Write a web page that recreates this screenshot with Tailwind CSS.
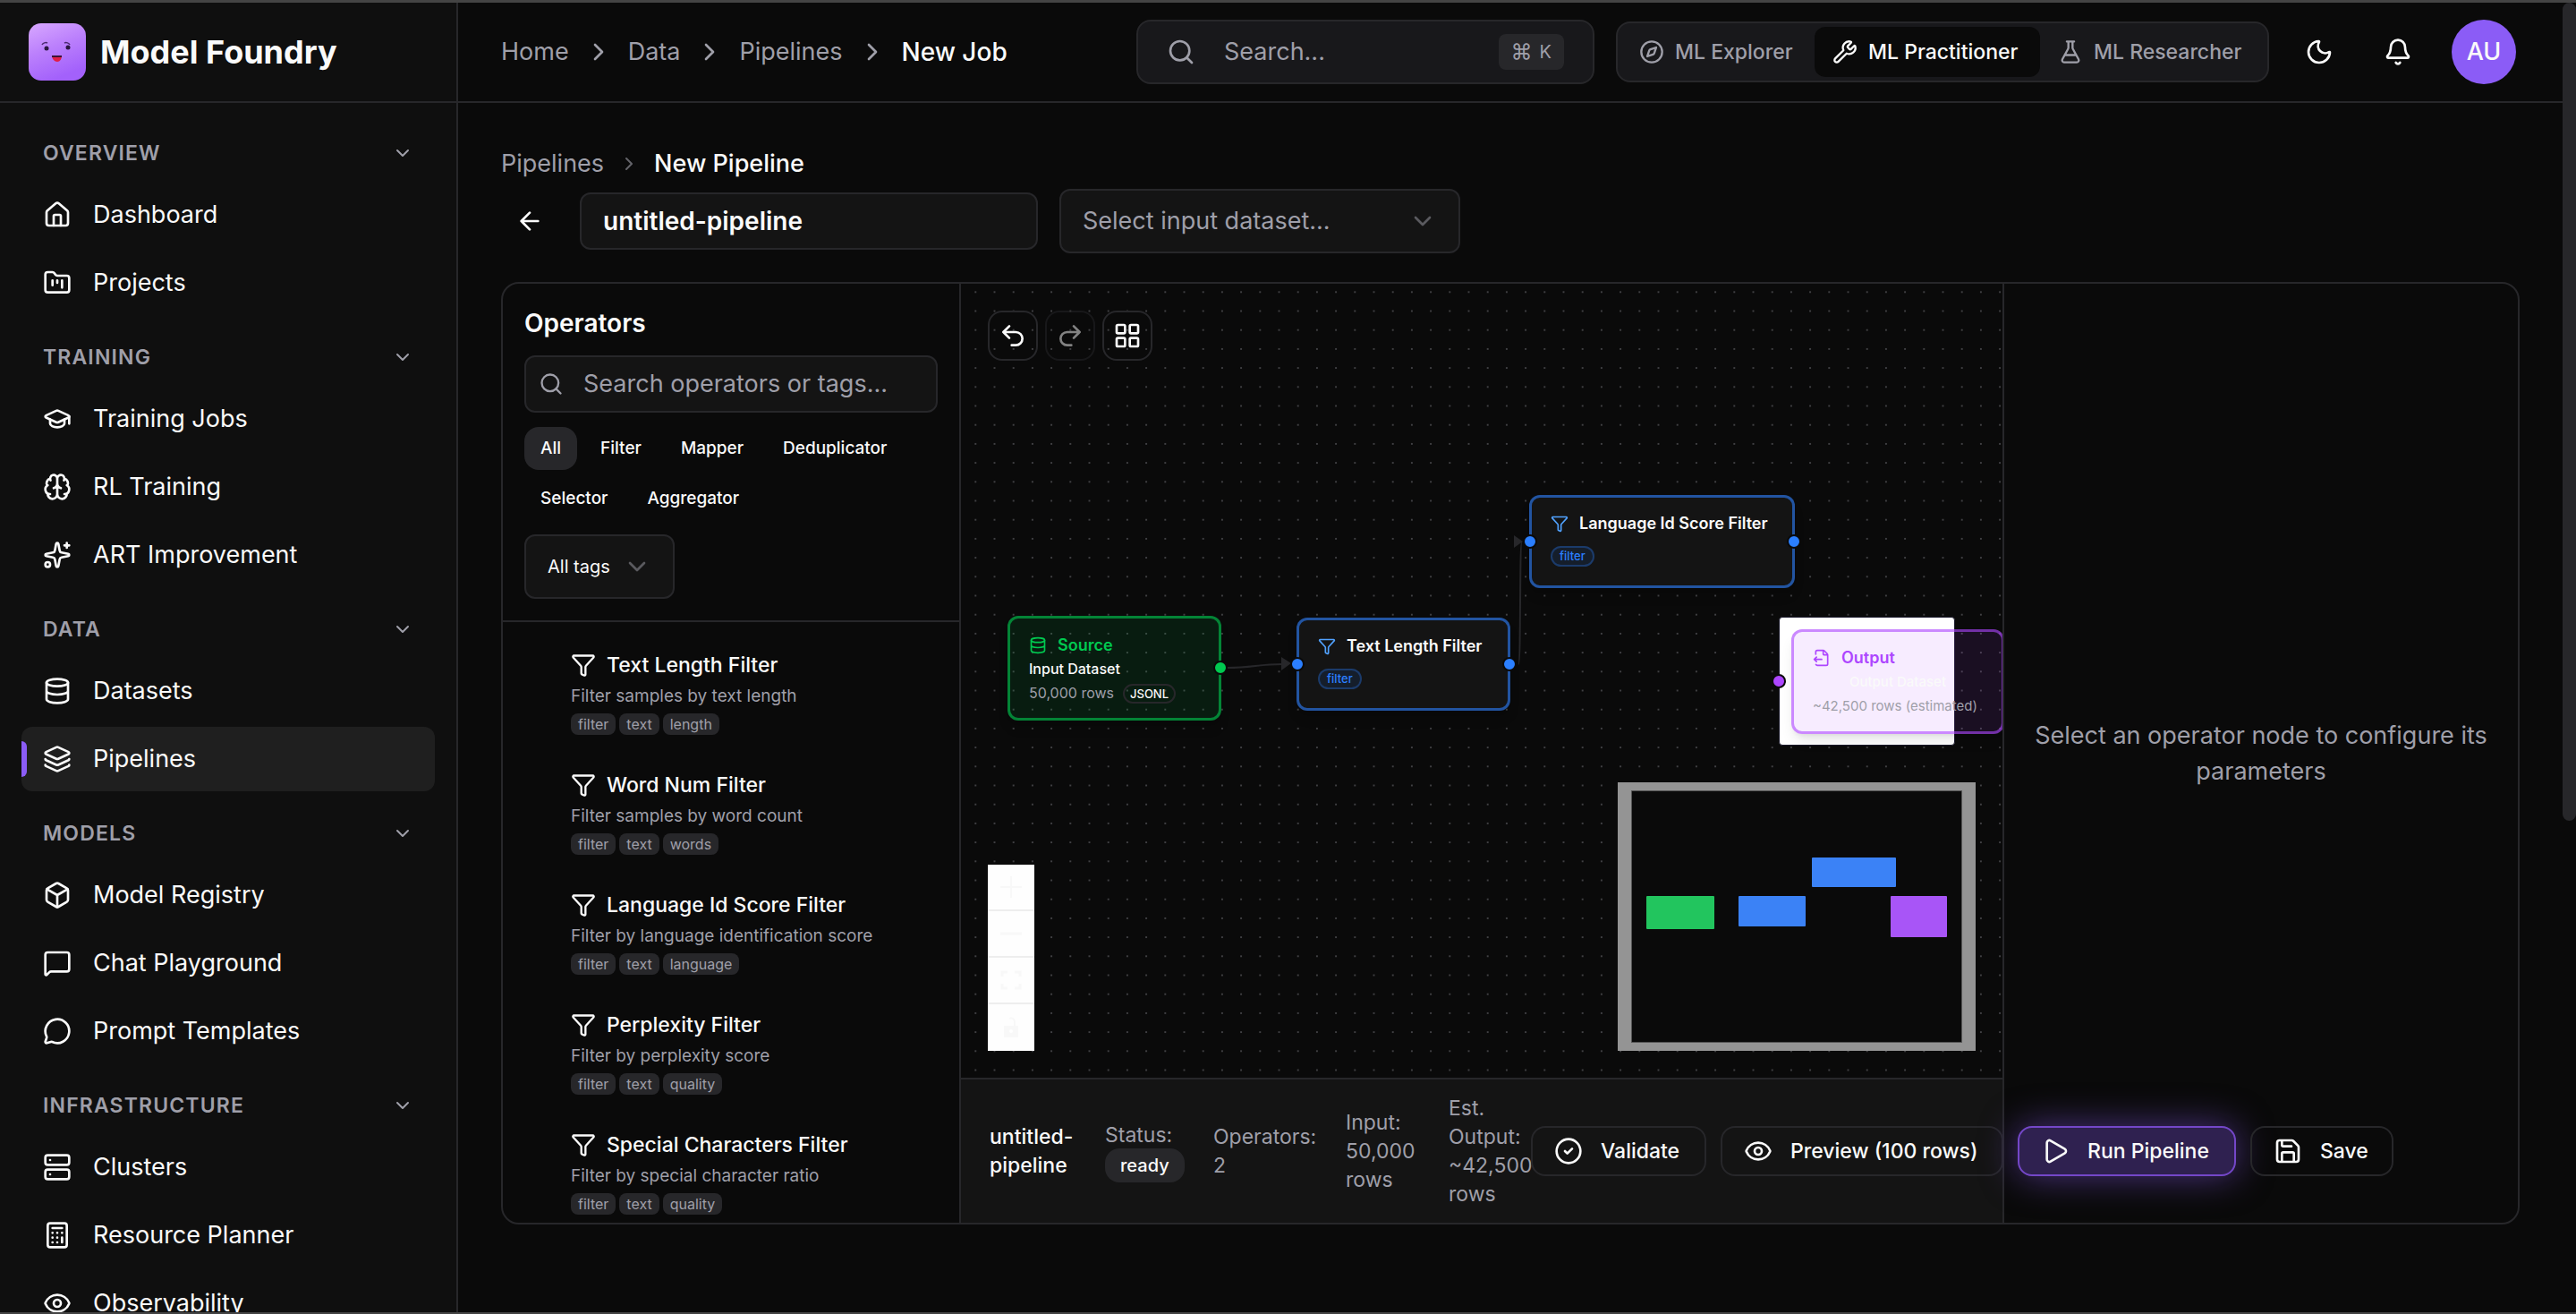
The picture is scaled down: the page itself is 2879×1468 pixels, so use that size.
<!DOCTYPE html>
<html lang="en">
<head>
<meta charset="UTF-8">
<meta name="viewport" content="width=device-width, initial-scale=1.0">
<title>New Pipeline – Model Foundry</title>
<script src="https://cdn.jsdelivr.net/npm/@tailwindcss/browser@4"></script>
</head>
<body class="flex h-screen overflow-hidden border-t-3 border-b-2 border-[#444] bg-[#0a0a0a] font-['Inter','Liberation_Sans',sans-serif] text-[27px] leading-10 text-[#fafafa]">

<!-- icon sprite -->
<svg class="hidden">
  <symbol id="house" viewBox="0 0 24 24"><path d="M15 21v-8a1 1 0 0 0-1-1h-4a1 1 0 0 0-1 1v8"/><path d="M3 10a2 2 0 0 1 .709-1.528l7-5.999a2 2 0 0 1 2.582 0l7 5.999A2 2 0 0 1 21 10v9a2 2 0 0 1-2 2H5a2 2 0 0 1-2-2z"/></symbol>
  <symbol id="folder" viewBox="0 0 24 24"><path d="M4 20h16a2 2 0 0 0 2-2V8a2 2 0 0 0-2-2h-7.93a2 2 0 0 1-1.66-.9l-.82-1.2A2 2 0 0 0 7.93 3H4a2 2 0 0 0-2 2v13c0 1.1.9 2 2 2Z"/><path d="M8 10v4M12 10v2M16 10v6"/></symbol>
  <symbol id="cap" viewBox="0 0 24 24"><path d="M21.42 10.922a1 1 0 0 0-.019-1.838L12.83 5.18a2 2 0 0 0-1.66 0L2.6 9.08a1 1 0 0 0 0 1.832l8.57 3.908a2 2 0 0 0 1.66 0z"/><path d="M22 10v6M6 12.5V16a6 3 0 0 0 12 0v-3.5"/></symbol>
  <symbol id="brain" viewBox="0 0 24 24"><path d="M12 18V5M15 13a4.17 4.17 0 0 1-3-4 4.17 4.17 0 0 1-3 4M17.598 6.5A3 3 0 1 0 12 5a3 3 0 1 0-5.598 1.5M17.997 5.125a4 4 0 0 1 2.526 5.77M18 18a4 4 0 0 0 2-7.464M19.967 17.483A4 4 0 1 1 12 18a4 4 0 1 1-7.967-.517M6 18a4 4 0 0 1-2-7.464M6.003 5.125a4 4 0 0 0-2.526 5.77"/></symbol>
  <symbol id="sparkles" viewBox="0 0 24 24"><path d="M11.017 2.814a1 1 0 0 1 1.966 0l1.051 5.558a2 2 0 0 0 1.594 1.594l5.558 1.051a1 1 0 0 1 0 1.966l-5.558 1.051a2 2 0 0 0-1.594 1.594l-1.051 5.558a1 1 0 0 1-1.966 0l-1.051-5.558a2 2 0 0 0-1.594-1.594l-5.558-1.051a1 1 0 0 1 0-1.966l5.558-1.051a2 2 0 0 0 1.594-1.594zM20 2v4M22 4h-4"/><circle cx="4" cy="20" r="2"/></symbol>
  <symbol id="database" viewBox="0 0 24 24"><ellipse cx="12" cy="5" rx="9" ry="3"/><path d="M3 5v14a9 3 0 0 0 18 0V5M3 12a9 3 0 0 0 18 0"/></symbol>
  <symbol id="layers" viewBox="0 0 24 24"><path d="M12.83 2.18a2 2 0 0 0-1.66 0L2.6 6.08a1 1 0 0 0 0 1.83l8.58 3.91a2 2 0 0 0 1.66 0l8.58-3.9a1 1 0 0 0 0-1.83zM2 12a1 1 0 0 0 .58.91l8.6 3.91a2 2 0 0 0 1.65 0l8.58-3.9A1 1 0 0 0 22 12M2 17a1 1 0 0 0 .58.91l8.6 3.91a2 2 0 0 0 1.65 0l8.58-3.9A1 1 0 0 0 22 17"/></symbol>
  <symbol id="box" viewBox="0 0 24 24"><path d="M21 8a2 2 0 0 0-1-1.73l-7-4a2 2 0 0 0-2 0l-7 4A2 2 0 0 0 3 8v8a2 2 0 0 0 1 1.73l7 4a2 2 0 0 0 2 0l7-4A2 2 0 0 0 21 16Z"/><path d="m3.3 7 8.7 5 8.7-5M12 22V12"/></symbol>
  <symbol id="chat" viewBox="0 0 24 24"><path d="M22 17a2 2 0 0 1-2 2H6.828a2 2 0 0 0-1.414.586l-2.202 2.202A.71.71 0 0 1 2 21.286V5a2 2 0 0 1 2-2h16a2 2 0 0 1 2 2z"/></symbol>
  <symbol id="bubble" viewBox="0 0 24 24"><path d="M2.992 16.342a2 2 0 0 1 .094 1.167l-1.065 3.29a1 1 0 0 0 1.236 1.168l3.413-.998a2 2 0 0 1 1.099.092 10 10 0 1 0-4.777-4.719"/></symbol>
  <symbol id="server" viewBox="0 0 24 24"><rect width="20" height="8" x="2" y="2" rx="2"/><rect width="20" height="8" x="2" y="14" rx="2"/><path d="M6 6h.01M6 18h.01"/></symbol>
  <symbol id="calculator" viewBox="0 0 24 24"><rect width="16" height="20" x="4" y="2" rx="2"/><path d="M8 6h8M16 14v4M16 10h.01M12 10h.01M8 10h.01M12 14h.01M8 14h.01M12 18h.01M8 18h.01"/></symbol>
  <symbol id="eye" viewBox="0 0 24 24"><path d="M2.062 12.348a1 1 0 0 1 0-.696 10.75 10.75 0 0 1 19.876 0 1 1 0 0 1 0 .696 10.75 10.75 0 0 1-19.876 0"/><circle cx="12" cy="12" r="3"/></symbol>
  <symbol id="funnel" viewBox="0 0 24 24"><path d="M10 20a1 1 0 0 0 .553.895l2 1A1 1 0 0 0 14 21v-7a2 2 0 0 1 .517-1.341L21.74 4.67A1 1 0 0 0 21 3H3a1 1 0 0 0-.742 1.67l7.225 7.989A2 2 0 0 1 10 14z"/></symbol>
  <symbol id="search" viewBox="0 0 24 24"><path d="m21 21-4.34-4.34"/><circle cx="11" cy="11" r="8"/></symbol>
  <symbol id="compass" viewBox="0 0 24 24"><circle cx="12" cy="12" r="10"/><path d="m16.24 7.76-1.804 5.411a2 2 0 0 1-1.265 1.265L7.76 16.24l1.804-5.411a2 2 0 0 1 1.265-1.265z"/></symbol>
  <symbol id="wrench" viewBox="0 0 24 24"><path d="M14.7 6.3a1 1 0 0 0 0 1.4l1.6 1.6a1 1 0 0 0 1.4 0l3.106-3.105c.32-.322.863-.22.983.218a6 6 0 0 1-8.259 7.057l-7.91 7.91a1 1 0 0 1-2.999-3l7.91-7.91a6 6 0 0 1 7.057-8.259c.438.12.54.662.219.984z"/></symbol>
  <symbol id="flask" viewBox="0 0 24 24"><path d="M14 2v6a2 2 0 0 0 .245.96l5.51 10.08A2 2 0 0 1 18 22H6a2 2 0 0 1-1.755-2.96l5.51-10.08A2 2 0 0 0 10 8V2M6.453 15h11.094M8.5 2h7"/></symbol>
  <symbol id="moon" viewBox="0 0 24 24"><path d="M20.985 12.486a9 9 0 1 1-9.473-9.472c.405-.022.617.46.402.803a6 6 0 0 0 8.268 8.268c.344-.215.825-.004.803.401"/></symbol>
  <symbol id="bell" viewBox="0 0 24 24"><path d="M10.268 21a2 2 0 0 0 3.464 0M3.262 15.326A1 1 0 0 0 4 17h16a1 1 0 0 0 .74-1.673C19.41 13.956 18 12.499 18 8A6 6 0 0 0 6 8c0 4.499-1.411 5.956-2.738 7.326"/></symbol>
  <symbol id="right" viewBox="0 0 24 24"><path d="m9 18 6-6-6-6"/></symbol>
  <symbol id="down" viewBox="0 0 24 24"><path d="m6 9 6 6 6-6"/></symbol>
  <symbol id="back" viewBox="0 0 24 24"><path d="m12 19-7-7 7-7M19 12H5"/></symbol>
  <symbol id="undo" viewBox="0 0 24 24"><path d="M9 14 4 9l5-5M4 9h10.5a5.5 5.5 0 0 1 0 11H11"/></symbol>
  <symbol id="redo" viewBox="0 0 24 24"><path d="m15 14 5-5-5-5M20 9H9.5a5.5 5.5 0 0 0 0 11H13"/></symbol>
  <symbol id="grid" viewBox="0 0 24 24"><rect width="7" height="7" x="3" y="3" rx="1"/><rect width="7" height="7" x="14" y="3" rx="1"/><rect width="7" height="7" x="14" y="14" rx="1"/><rect width="7" height="7" x="3" y="14" rx="1"/></symbol>
  <symbol id="check" viewBox="0 0 24 24"><circle cx="12" cy="12" r="10"/><path d="m9 12 2 2 4-4"/></symbol>
  <symbol id="play" viewBox="0 0 24 24"><path d="M5 5a2 2 0 0 1 3.008-1.728l11.997 6.998a2 2 0 0 1 .003 3.458l-12 7A2 2 0 0 1 5 19z"/></symbol>
  <symbol id="save" viewBox="0 0 24 24"><path d="M15.2 3a2 2 0 0 1 1.4.6l3.8 3.8a2 2 0 0 1 .6 1.4V19a2 2 0 0 1-2 2H5a2 2 0 0 1-2-2V5a2 2 0 0 1 2-2zM17 21v-7a1 1 0 0 0-1-1H8a1 1 0 0 0-1 1v7M7 3v4a1 1 0 0 0 1 1h7"/></symbol>
  <symbol id="output" viewBox="0 0 24 24"><path d="M14 2v5a1 1 0 0 0 1 1h5M4.226 20.925A2 2 0 0 0 6 22h12a2 2 0 0 0 2-2V8a2.4 2.4 0 0 0-.706-1.706l-3.588-3.588A2.4 2.4 0 0 0 14 2H6a2 2 0 0 0-2 2v3.127M5 11l-3 3M5 17l-3-3h10"/></symbol>
</svg>

<aside class="flex w-128 shrink-0 flex-col border-r-2 border-[#27272a] bg-[#0f0f0f]">
  <a href="#" class="flex h-28 shrink-0 items-center gap-4 border-b-2 border-[#27272a] px-8 text-4xl font-bold">
    <svg class="size-16" viewBox="0 0 64 64" aria-hidden="true">
      <defs>
        <linearGradient id="slime" x1="0" y1="0" x2=".4" y2="1"><stop offset="0" stop-color="#d8a8ff"/><stop offset=".5" stop-color="#bb80fc"/><stop offset="1" stop-color="#a361fb"/></linearGradient>
      </defs>
      <rect width="64" height="64" rx="14" fill="url(#slime)"/>
      <path d="M15 24c1-2 4-3 6-2M40 22c2-1 5 0 6 2" fill="none" stroke="#4a2a6e" stroke-width="1.5"/>
      <circle cx="20" cy="28" r="2.5" fill="#2a1740"/><circle cx="44" cy="27" r="2.5" fill="#2a1740"/>
      <path d="M26 36h11c0 4-2 7-5 7s-6-3-6-7z" fill="#e11d48"/><path d="M26 36h11v2H26z" fill="#3b1236"/>
    </svg>
    Model Foundry
  </a>

  <nav class="flex min-h-0 flex-1 flex-col gap-[22px] overflow-hidden px-6 pt-[31px]" aria-label="Main">
    <section class="shrink-0">
      <button class="mb-2 flex h-[50px] w-full items-center justify-between px-6 text-[23px] font-semibold tracking-wider text-[#9f9fa9]">OVERVIEW
        <svg class="size-6" fill="none" stroke="currentColor" stroke-width="2" stroke-linecap="round" stroke-linejoin="round"><use href="#down"/></svg></button>
      <div class="flex flex-col gap-1">
        <a href="#" class="flex h-18 items-center gap-6 rounded-2xl px-6"><svg class="size-8" fill="none" stroke="currentColor" stroke-width="2" stroke-linecap="round" stroke-linejoin="round"><use href="#house"/></svg>Dashboard</a>
        <a href="#" class="flex h-18 items-center gap-6 rounded-2xl px-6"><svg class="size-8" fill="none" stroke="currentColor" stroke-width="2" stroke-linecap="round" stroke-linejoin="round"><use href="#folder"/></svg>Projects</a>
      </div>
    </section>
    <section class="shrink-0">
      <button class="mb-2 flex h-[50px] w-full items-center justify-between px-6 text-[23px] font-semibold tracking-wider text-[#9f9fa9]">TRAINING
        <svg class="size-6" fill="none" stroke="currentColor" stroke-width="2" stroke-linecap="round" stroke-linejoin="round"><use href="#down"/></svg></button>
      <div class="flex flex-col gap-1">
        <a href="#" class="flex h-18 items-center gap-6 rounded-2xl px-6"><svg class="size-8" fill="none" stroke="currentColor" stroke-width="2" stroke-linecap="round" stroke-linejoin="round"><use href="#cap"/></svg>Training Jobs</a>
        <a href="#" class="flex h-18 items-center gap-6 rounded-2xl px-6"><svg class="size-8" fill="none" stroke="currentColor" stroke-width="2" stroke-linecap="round" stroke-linejoin="round"><use href="#brain"/></svg>RL Training</a>
        <a href="#" class="flex h-18 items-center gap-6 rounded-2xl px-6"><svg class="size-8" fill="none" stroke="currentColor" stroke-width="2" stroke-linecap="round" stroke-linejoin="round"><use href="#sparkles"/></svg>ART Improvement</a>
      </div>
    </section>
    <section class="shrink-0">
      <button class="mb-2 flex h-[50px] w-full items-center justify-between px-6 text-[23px] font-semibold tracking-wider text-[#9f9fa9]">DATA
        <svg class="size-6" fill="none" stroke="currentColor" stroke-width="2" stroke-linecap="round" stroke-linejoin="round"><use href="#down"/></svg></button>
      <div class="flex flex-col gap-1">
        <a href="#" class="flex h-18 items-center gap-6 rounded-2xl px-6"><svg class="size-8" fill="none" stroke="currentColor" stroke-width="2" stroke-linecap="round" stroke-linejoin="round"><use href="#database"/></svg>Datasets</a>
        <a href="#" aria-current="page" class="flex h-18 items-center rounded-xl bg-[#1f1f1f]"><span class="mr-[18px] h-10 w-[6px] rounded-r-md bg-[#8b5cf6]"></span><svg class="mr-6 size-8" fill="none" stroke="currentColor" stroke-width="2" stroke-linecap="round" stroke-linejoin="round"><use href="#layers"/></svg>Pipelines</a>
      </div>
    </section>
    <section class="shrink-0">
      <button class="mb-2 flex h-[50px] w-full items-center justify-between px-6 text-[23px] font-semibold tracking-wider text-[#9f9fa9]">MODELS
        <svg class="size-6" fill="none" stroke="currentColor" stroke-width="2" stroke-linecap="round" stroke-linejoin="round"><use href="#down"/></svg></button>
      <div class="flex flex-col gap-1">
        <a href="#" class="flex h-18 items-center gap-6 rounded-2xl px-6"><svg class="size-8" fill="none" stroke="currentColor" stroke-width="2" stroke-linecap="round" stroke-linejoin="round"><use href="#box"/></svg>Model Registry</a>
        <a href="#" class="flex h-18 items-center gap-6 rounded-2xl px-6"><svg class="size-8" fill="none" stroke="currentColor" stroke-width="2" stroke-linecap="round" stroke-linejoin="round"><use href="#chat"/></svg>Chat Playground</a>
        <a href="#" class="flex h-18 items-center gap-6 rounded-2xl px-6"><svg class="size-8" fill="none" stroke="currentColor" stroke-width="2" stroke-linecap="round" stroke-linejoin="round"><use href="#bubble"/></svg>Prompt Templates</a>
      </div>
    </section>
    <section class="shrink-0">
      <button class="mb-2 flex h-[50px] w-full items-center justify-between px-6 text-[23px] font-semibold tracking-wider text-[#9f9fa9]">INFRASTRUCTURE
        <svg class="size-6" fill="none" stroke="currentColor" stroke-width="2" stroke-linecap="round" stroke-linejoin="round"><use href="#down"/></svg></button>
      <div class="flex flex-col gap-1">
        <a href="#" class="flex h-18 items-center gap-6 rounded-2xl px-6"><svg class="size-8" fill="none" stroke="currentColor" stroke-width="2" stroke-linecap="round" stroke-linejoin="round"><use href="#server"/></svg>Clusters</a>
        <a href="#" class="flex h-18 items-center gap-6 rounded-2xl px-6"><svg class="size-8" fill="none" stroke="currentColor" stroke-width="2" stroke-linecap="round" stroke-linejoin="round"><use href="#calculator"/></svg>Resource Planner</a>
        <a href="#" class="flex h-18 items-center gap-6 rounded-2xl px-6"><svg class="size-8" fill="none" stroke="currentColor" stroke-width="2" stroke-linecap="round" stroke-linejoin="round"><use href="#eye"/></svg>Observability</a>
      </div>
    </section>
  </nav>
</aside>

<div class="flex min-w-0 flex-1 flex-col">
  <header class="flex h-28 shrink-0 items-center gap-6 border-b-2 border-[#27272a] px-12">
    <nav class="mr-auto flex items-center gap-[17px] text-[#9f9fa9]" aria-label="Breadcrumb">
      <a href="#">Home</a>
      <svg class="size-8" fill="none" stroke="currentColor" stroke-width="2" stroke-linecap="round" stroke-linejoin="round"><use href="#right"/></svg>
      <a href="#">Data</a>
      <svg class="size-8" fill="none" stroke="currentColor" stroke-width="2" stroke-linecap="round" stroke-linejoin="round"><use href="#right"/></svg>
      <a href="#">Pipelines</a>
      <svg class="size-8" fill="none" stroke="currentColor" stroke-width="2" stroke-linecap="round" stroke-linejoin="round"><use href="#right"/></svg>
      <span class="text-[28px] font-medium text-[#fafafa]">New Job</span>
    </nav>
    <label class="flex h-18 w-128 items-center rounded-2xl border-2 border-[#27272a] bg-[#18181b] px-8 text-[#9f9fa9]">
      <svg class="mr-8 size-8 shrink-0" fill="none" stroke="currentColor" stroke-width="2" stroke-linecap="round" stroke-linejoin="round"><use href="#search"/></svg>
      <input type="text" aria-label="Search" placeholder="Search..." class="min-w-0 flex-1 placeholder:text-[#9f9fa9]">
      <kbd class="flex h-10 items-center gap-2 rounded-lg bg-[#27272a] px-[14px] font-['Inter','DejaVu_Sans',sans-serif] text-xl"><span class="text-2xl">⌘</span>K</kbd>
    </label>
    <div class="flex h-17 items-center rounded-2xl border-2 border-[#27272a] bg-[#18181b] px-1 text-[23px] font-medium text-[#9f9fa9]">
      <button class="flex h-14 w-54 items-center gap-3 pl-5"><svg class="size-7" fill="none" stroke="currentColor" stroke-width="2" stroke-linecap="round" stroke-linejoin="round"><use href="#compass"/></svg>ML Explorer</button>
      <button class="flex h-14 w-63 items-center gap-3 rounded-xl bg-[#0a0a0a] pl-5 text-[#fafafa]"><svg class="size-7" fill="none" stroke="currentColor" stroke-width="2" stroke-linecap="round" stroke-linejoin="round"><use href="#wrench"/></svg>ML Practitioner</button>
      <button class="flex h-14 w-[250px] items-center gap-3 pl-5"><svg class="size-7" fill="none" stroke="currentColor" stroke-width="2" stroke-linecap="round" stroke-linejoin="round"><use href="#flask"/></svg>ML Researcher</button>
    </div>
    <button class="grid size-16 place-items-center" aria-label="Toggle theme"><svg class="size-8" fill="none" stroke="currentColor" stroke-width="2" stroke-linecap="round" stroke-linejoin="round"><use href="#moon"/></svg></button>
    <button class="grid size-16 place-items-center" aria-label="Notifications"><svg class="size-8" fill="none" stroke="currentColor" stroke-width="2" stroke-linecap="round" stroke-linejoin="round"><use href="#bell"/></svg></button>
    <button class="grid size-20 place-items-center" aria-label="Account"><span class="grid size-18 place-items-center rounded-full bg-[#8b5cf6] font-medium">AU</span></button>
  </header>

  <main class="flex min-h-0 flex-1 flex-col px-12 pt-12 pb-[98px]">
    <nav class="flex items-center gap-4 text-[#9f9fa9]" aria-label="Page">
      <a href="#">Pipelines</a>
      <svg class="size-6 opacity-60" fill="none" stroke="currentColor" stroke-width="2" stroke-linecap="round" stroke-linejoin="round"><use href="#right"/></svg>
      <h1 class="font-medium text-[#fafafa]">New Pipeline</h1>
    </nav>
    <div class="mt-2 flex items-center">
      <button class="mr-6 grid size-16 place-items-center" aria-label="Back"><svg class="size-8" fill="none" stroke="currentColor" stroke-width="2" stroke-linecap="round" stroke-linejoin="round"><use href="#back"/></svg></button>
      <input type="text" aria-label="Pipeline name" value="untitled-pipeline" class="mr-6 h-16 w-128 rounded-xl border-2 border-[#27272a] bg-[#141414] px-6 text-[28px] font-semibold">
      <div class="relative">
        <select aria-label="Input dataset" class="h-18 w-112 appearance-none rounded-xl border-2 border-[#27272a] bg-[#141414] px-6 text-[#9f9fa9]"><option>Select input dataset...</option></select>
        <svg class="pointer-events-none absolute top-5 right-[26px] size-8 text-[#9f9fa9] opacity-50" fill="none" stroke="currentColor" stroke-width="2" stroke-linecap="round" stroke-linejoin="round"><use href="#down"/></svg>
      </div>
    </div>

    <div class="mt-8 grid min-h-0 flex-1 grid-cols-[512px_minmax(0,1fr)_576px] rounded-[20px] border-2 border-[#27272a]">

      <!-- operator library -->
      <section class="flex min-h-0 flex-col border-r-2 border-[#27272a]">
        <div class="flex flex-col items-start gap-4 border-b-2 border-[#27272a] p-6">
          <h2 class="text-[28px] font-semibold">Operators</h2>
          <label class="flex h-16 w-full items-center rounded-xl border-2 border-[#27272a] bg-[#141414] px-[14px] text-[#9f9fa9]">
            <svg class="mr-[22px] size-7 shrink-0" fill="none" stroke="currentColor" stroke-width="2" stroke-linecap="round" stroke-linejoin="round"><use href="#search"/></svg>
            <input type="text" aria-label="Search operators" placeholder="Search operators or tags..." class="min-w-0 flex-1 placeholder:text-[#9f9fa9]">
          </label>
          <div class="flex flex-wrap gap-2 text-[19px] font-medium">
            <button class="h-12 rounded-2xl bg-[#27272a] px-[18px]">All</button>
            <button class="h-12 px-[18px]">Filter</button>
            <button class="h-12 px-[18px]">Mapper</button>
            <button class="h-12 px-[18px]">Deduplicator</button>
            <button class="h-12 px-[18px]">Selector</button>
            <button class="h-12 px-[18px]">Aggregator</button>
          </div>
          <div class="relative">
            <select aria-label="Tags" class="h-18 w-42 appearance-none rounded-xl border-2 border-[#27272a] bg-[#141414] px-6 text-xl"><option>All tags</option></select>
            <svg class="pointer-events-none absolute top-5 right-[26px] size-8 text-[#9f9fa9] opacity-50" fill="none" stroke="currentColor" stroke-width="2" stroke-linecap="round" stroke-linejoin="round"><use href="#down"/></svg>
          </div>
        </div>
        <ul class="flex min-h-0 flex-1 flex-col gap-10 overflow-hidden pt-8 pl-[76px]">
          <li class="flex flex-col gap-1">
            <h3 class="flex h-8 items-center gap-3 text-[23px] font-medium"><svg class="size-7" fill="none" stroke="currentColor" stroke-width="2" stroke-linecap="round" stroke-linejoin="round"><use href="#funnel"/></svg>Text Length Filter</h3>
            <p class="text-[19px] leading-[30px] text-[#9f9fa9]">Filter samples by text length</p>
            <p class="flex gap-1 text-base leading-6 text-[#9f9fa9]"><span class="rounded-lg bg-[#27272a] px-2">filter</span><span class="rounded-lg bg-[#27272a] px-2">text</span><span class="rounded-lg bg-[#27272a] px-2">length</span></p>
          </li>
          <li class="flex flex-col gap-1">
            <h3 class="flex h-8 items-center gap-3 text-[23px] font-medium"><svg class="size-7" fill="none" stroke="currentColor" stroke-width="2" stroke-linecap="round" stroke-linejoin="round"><use href="#funnel"/></svg>Word Num Filter</h3>
            <p class="text-[19px] leading-[30px] text-[#9f9fa9]">Filter samples by word count</p>
            <p class="flex gap-1 text-base leading-6 text-[#9f9fa9]"><span class="rounded-lg bg-[#27272a] px-2">filter</span><span class="rounded-lg bg-[#27272a] px-2">text</span><span class="rounded-lg bg-[#27272a] px-2">words</span></p>
          </li>
          <li class="flex flex-col gap-1">
            <h3 class="flex h-8 items-center gap-3 text-[23px] font-medium"><svg class="size-7" fill="none" stroke="currentColor" stroke-width="2" stroke-linecap="round" stroke-linejoin="round"><use href="#funnel"/></svg>Language Id Score Filter</h3>
            <p class="text-[19px] leading-[30px] text-[#9f9fa9]">Filter by language identification score</p>
            <p class="flex gap-1 text-base leading-6 text-[#9f9fa9]"><span class="rounded-lg bg-[#27272a] px-2">filter</span><span class="rounded-lg bg-[#27272a] px-2">text</span><span class="rounded-lg bg-[#27272a] px-2">language</span></p>
          </li>
          <li class="flex flex-col gap-1">
            <h3 class="flex h-8 items-center gap-3 text-[23px] font-medium"><svg class="size-7" fill="none" stroke="currentColor" stroke-width="2" stroke-linecap="round" stroke-linejoin="round"><use href="#funnel"/></svg>Perplexity Filter</h3>
            <p class="text-[19px] leading-[30px] text-[#9f9fa9]">Filter by perplexity score</p>
            <p class="flex gap-1 text-base leading-6 text-[#9f9fa9]"><span class="rounded-lg bg-[#27272a] px-2">filter</span><span class="rounded-lg bg-[#27272a] px-2">text</span><span class="rounded-lg bg-[#27272a] px-2">quality</span></p>
          </li>
          <li class="flex flex-col gap-1">
            <h3 class="flex h-8 items-center gap-3 text-[23px] font-medium"><svg class="size-7" fill="none" stroke="currentColor" stroke-width="2" stroke-linecap="round" stroke-linejoin="round"><use href="#funnel"/></svg>Special Characters Filter</h3>
            <p class="text-[19px] leading-[30px] text-[#9f9fa9]">Filter by special character ratio</p>
            <p class="flex gap-1 text-base leading-6 text-[#9f9fa9]"><span class="rounded-lg bg-[#27272a] px-2">filter</span><span class="rounded-lg bg-[#27272a] px-2">text</span><span class="rounded-lg bg-[#27272a] px-2">quality</span></p>
          </li>
        </ul>
      </section>

      <section class="flex min-h-0 min-w-0 flex-col">
        <!-- flow canvas -->
        <div class="relative min-h-0 flex-1 overflow-hidden">
          <svg class="absolute inset-0 size-full" aria-hidden="true">
            <pattern id="dots" x="5.7" y="-1.3" width="21.2" height="21.2" patternUnits="userSpaceOnUse"><circle cx="10.6" cy="10.6" r=".8" fill="#83838b"/></pattern>
            <rect width="100%" height="100%" fill="url(#dots)"/>
            <g fill="none" stroke="#27272a" stroke-width="2">
              <path d="M298 429C326 429 332 425 360 425"/>
              <path d="M623 425C626 425 624 288 627 288"/>
            </g>
            <path d="M358 417l11 7-11 8zM618 281l10 7-10 7z" fill="#27272a"/>
          </svg>

          <div class="absolute top-[30px] left-[30px] flex gap-2">
            <button class="grid size-14 place-items-center rounded-2xl border-2 border-[#27272a]" aria-label="Undo"><svg class="size-8" fill="none" stroke="currentColor" stroke-width="2" stroke-linecap="round" stroke-linejoin="round"><use href="#undo"/></svg></button>
            <button disabled class="grid size-14 place-items-center rounded-2xl border-2 border-[#27272a] opacity-50" aria-label="Redo"><svg class="size-8" fill="none" stroke="currentColor" stroke-width="2" stroke-linecap="round" stroke-linejoin="round"><use href="#redo"/></svg></button>
            <button class="grid size-14 place-items-center rounded-2xl border-2 border-[#27272a]" aria-label="Auto layout"><svg class="size-8" fill="none" stroke="currentColor" stroke-width="2" stroke-linecap="round" stroke-linejoin="round"><use href="#grid"/></svg></button>
          </div>

          <div class="absolute top-[371px] left-[52px] h-[117px] w-[239px] rounded-xl border-3 border-[#00c950]/60 bg-[#00c950]/10 px-[21px] pt-4 text-base leading-[27px] shadow-lg">
            <h4 class="flex items-center gap-3 text-[18px] font-semibold text-[#00c950]"><svg class="size-5" fill="none" stroke="currentColor" stroke-width="2" stroke-linecap="round" stroke-linejoin="round"><use href="#database"/></svg>Source</h4>
            <p class="font-medium">Input Dataset</p>
            <p class="flex items-center text-[#9f9fa9]">50,000 rows <span class="ml-[10px] rounded-full border-2 border-[#27272a] px-[6px] text-[13px] leading-[18px] font-medium text-[#fafafa]">JSONL</span></p>
            <span class="absolute top-[47px] -right-[10px] size-4 rounded-full border-2 border-[#0a0a0a] bg-[#00c950]"></span>
          </div>

          <div class="absolute top-[373px] left-[375px] h-[104px] w-[239px] rounded-xl border-3 border-[#2b7fff]/60 bg-[#141414] px-[21px] pt-[13px] shadow-lg">
            <h4 class="flex h-8 items-center gap-3 text-[18px] font-semibold whitespace-nowrap"><svg class="size-5 text-[#51a2ff]" fill="none" stroke="currentColor" stroke-width="2" stroke-linecap="round" stroke-linejoin="round"><use href="#funnel"/></svg>Text Length Filter</h4>
            <span class="mt-[9px] block w-fit rounded-full border-2 border-[#2b7fff]/30 bg-[#2b7fff]/10 px-2 text-[13px] leading-[19px] font-medium text-[#2b7fff]">filter</span>
            <span class="absolute top-[41px] -left-[10px] size-4 rounded-full border-2 border-[#0a0a0a] bg-[#2b7fff]"></span>
            <span class="absolute top-[41px] -right-[10px] size-4 rounded-full border-2 border-[#0a0a0a] bg-[#2b7fff]"></span>
          </div>

          <div class="absolute top-[236px] left-[635px] h-[104px] w-[297px] rounded-xl border-3 border-[#2b7fff]/60 bg-[#141414] px-[21px] pt-[13px] shadow-lg">
            <h4 class="flex h-8 items-center gap-3 text-[18px] font-semibold whitespace-nowrap"><svg class="size-5 text-[#51a2ff]" fill="none" stroke="currentColor" stroke-width="2" stroke-linecap="round" stroke-linejoin="round"><use href="#funnel"/></svg>Language Id Score Filter</h4>
            <span class="mt-[9px] block w-fit rounded-full border-2 border-[#2b7fff]/30 bg-[#2b7fff]/10 px-2 text-[13px] leading-[19px] font-medium text-[#2b7fff]">filter</span>
            <span class="absolute top-[41px] -left-[10px] size-4 rounded-full border-2 border-[#0a0a0a] bg-[#2b7fff]"></span>
            <span class="absolute top-[41px] -right-[10px] size-4 rounded-full border-2 border-[#0a0a0a] bg-[#2b7fff]"></span>
          </div>

          <div class="absolute top-[372px] left-[914px] h-36 w-[197px] rounded-sm border border-[#1a192b] bg-white p-[13px]">
            <div class="h-[117px] w-[238px] rounded-xl border-3 border-[#ad46ff]/60 bg-[#ad46ff]/10 px-[21px] pt-[15px] text-[15px] leading-[27px] shadow-lg">
              <h4 class="flex items-center gap-3 text-[18px] font-semibold text-[#ad46ff]"><svg class="size-5" fill="none" stroke="currentColor" stroke-width="2" stroke-linecap="round" stroke-linejoin="round"><use href="#output"/></svg>Output</h4>
              <p class="text-center font-medium">Output Dataset</p>
              <p class="whitespace-nowrap text-[#9f9fa9]">~42,500 rows (estimated)</p>
            </div>
            <span class="absolute top-[63px] -left-[9px] size-4 rounded-full border-2 border-[#0a0a0a] bg-[#ad46ff]"></span>
          </div>

          <!-- zoom controls -->
          <div class="absolute bottom-[30px] left-[30px] w-13 divide-y-2 divide-[#eee] bg-[#fefefe] text-[#f8f8f8]">
            <button class="grid h-13 w-full place-items-center" aria-label="Zoom in"><svg class="size-6" viewBox="0 0 24 24" fill="none" stroke="currentColor" stroke-width="2"><path d="M12 0v24M0 12h24"/></svg></button>
            <button class="grid h-13 w-full place-items-center" aria-label="Zoom out"><svg class="size-6" viewBox="0 0 24 24" fill="none" stroke="currentColor" stroke-width="3"><path d="M0 12h24"/></svg></button>
            <button class="grid h-13 w-full place-items-center" aria-label="Fit view"><svg class="size-6" viewBox="0 0 24 24" fill="none" stroke="currentColor" stroke-width="3"><path d="M2 8V3h6M16 3h6v5M22 16v5h-6M8 21H2v-5"/></svg></button>
            <button class="grid h-13 w-full place-items-center" aria-label="Lock"><svg class="size-6" viewBox="0 0 24 24"><path d="M4 10h16v13H4z" fill="currentColor"/><path d="M16 10V5a4 4 0 0 0-6-3" fill="none" stroke="currentColor" stroke-width="2"/><circle cx="12" cy="16" r="2" fill="#fff"/></svg></button>
          </div>

          <svg class="absolute right-[30px] bottom-[30px] h-75 w-100" viewBox="0 0 400 300" role="img" aria-label="Mini map">
            <path d="M0 0h400v300H0z" fill="#949494"/>
            <path d="M15.5 9.5h369v281h-369z" fill="#0a0a0a" stroke="#555"/>
            <rect x="32" y="127" width="76" height="37" rx="1" fill="#22c55e"/>
            <rect x="135" y="127" width="75" height="34" rx="1" fill="#3b82f6"/>
            <rect x="217" y="84" width="94" height="33" rx="1" fill="#3b82f6"/>
            <rect x="305" y="127" width="63" height="46" rx="1" fill="#a855f7"/>
          </svg>
        </div>

        <!-- status bar; its actions run on over the inspector -->
        <div class="relative z-10 flex items-center border-t-2 border-[#27272a] bg-[#141414] py-4 pl-8 text-[23px] leading-8 text-[#9f9fa9]">
          <div class="flex shrink-0 items-center gap-8">
            <p class="w-[97px] font-medium text-[#fafafa]">untitled-pipeline</p>
            <p class="w-[89px]">Status: <span class="mt-[-1px] flex h-[38px] w-fit items-center rounded-2xl bg-[#27272a] px-[17px] text-xl font-medium text-[#fafafa]">ready</span></p>
            <p class="w-29">Operators: 2</p>
            <p class="w-[83px]">Input: 50,000 rows</p>
            <p class="w-[92px]">Est. Output: ~42,500 rows</p>
          </div>
          <div class="flex shrink-0 items-center gap-4 font-medium text-[#fafafa]">
            <button class="flex h-14 w-49 items-center gap-5 rounded-2xl border-2 border-[#27272a] pl-6 whitespace-nowrap"><svg class="size-8" fill="none" stroke="currentColor" stroke-width="2" stroke-linecap="round" stroke-linejoin="round"><use href="#check"/></svg>Validate</button>
            <button class="flex h-14 w-79 items-center gap-5 rounded-2xl border-2 border-[#27272a] pl-6 whitespace-nowrap"><svg class="size-8 shrink-0" fill="none" stroke="currentColor" stroke-width="2" stroke-linecap="round" stroke-linejoin="round"><use href="#eye"/></svg>Preview (100 rows)</button>
            <button class="flex h-14 w-61 items-center gap-5 rounded-2xl border-2 border-[#7447c8] bg-[#2f2150] pl-6 whitespace-nowrap shadow-[0_0_40px_rgba(139,92,246,0.5)]"><svg class="size-8" fill="none" stroke="currentColor" stroke-width="2" stroke-linecap="round" stroke-linejoin="round"><use href="#play"/></svg>Run Pipeline</button>
            <button class="flex h-14 w-40 items-center gap-5 rounded-2xl border-2 border-[#27272a] pl-6 whitespace-nowrap"><svg class="size-8" fill="none" stroke="currentColor" stroke-width="2" stroke-linecap="round" stroke-linejoin="round"><use href="#save"/></svg>Save</button>
          </div>
        </div>
      </section>

      <section class="grid place-items-center border-l-2 border-[#27272a] px-8 text-center text-[#9f9fa9]">
        <p>Select an operator node to configure its parameters</p>
      </section>
    </div>
  </main>
</div>

<!-- scroll track -->
<div class="w-[15px] shrink-0"><div class="h-5/8 rounded-full bg-[#27272a]"></div></div>

</body>
</html>
